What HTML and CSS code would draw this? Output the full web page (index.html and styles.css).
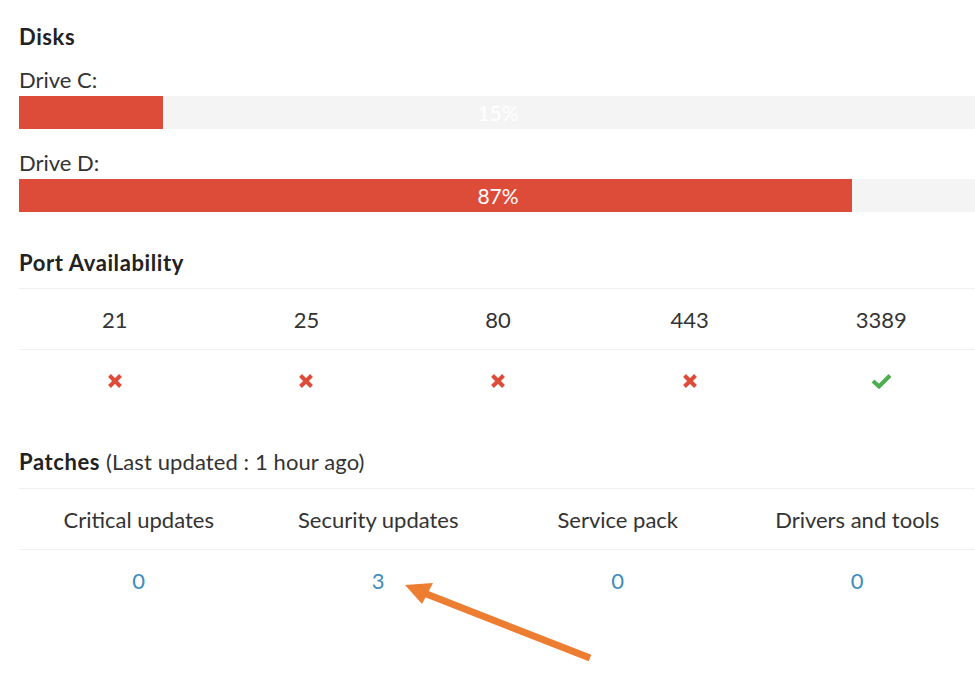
FILE: index.html
```html
<!DOCTYPE html>
<html>
<head>
<meta charset="utf-8">
<link rel="stylesheet" href="styles.css">
</head>
<body>
<div class="page">
  <h4 class="title t-disks">Disks</h4>
  <div class="drive-label first">Drive C:</div>
  <div class="progress">
    <div class="bar" style="width:15%"></div>
    <span class="pct pct-light">15%</span>
  </div>
  <div class="drive-label">Drive D:</div>
  <div class="progress">
    <div class="bar" style="width:87%"></div>
    <span class="pct">87%</span>
  </div>

  <h4 class="title t-ports">Port Availability</h4>
  <div class="grid ports">
    <div class="row">
      <div class="cell">21</div><div class="cell">25</div><div class="cell">80</div><div class="cell">443</div><div class="cell">3389</div>
    </div>
    <div class="row icons">
      <div class="cell"><svg class="x" viewBox="0 0 16 16"><path d="M2.5 2.5 L13.5 13.5 M13.5 2.5 L2.5 13.5"/></svg></div>
      <div class="cell"><svg class="x" viewBox="0 0 16 16"><path d="M2.5 2.5 L13.5 13.5 M13.5 2.5 L2.5 13.5"/></svg></div>
      <div class="cell"><svg class="x" viewBox="0 0 16 16"><path d="M2.5 2.5 L13.5 13.5 M13.5 2.5 L2.5 13.5"/></svg></div>
      <div class="cell"><svg class="x" viewBox="0 0 16 16"><path d="M2.5 2.5 L13.5 13.5 M13.5 2.5 L2.5 13.5"/></svg></div>
      <div class="cell"><svg class="check" viewBox="0 0 21 16"><path d="M2 8 L8 13.5 L19 2.5"/></svg></div>
    </div>
  </div>

  <h4 class="title t-patches">Patches <span class="sub">(Last updated : 1 hour ago)</span></h4>
  <div class="grid patches">
    <div class="row">
      <div class="cell">Critical updates</div><div class="cell">Security updates</div><div class="cell">Service pack</div><div class="cell">Drivers and tools</div>
    </div>
    <div class="row">
      <div class="cell"><a class="num">0</a></div><div class="cell"><a class="num">3</a></div><div class="cell"><a class="num">0</a></div><div class="cell"><a class="num">0</a></div>
    </div>
  </div>
</div>
<svg class="arrow" width="975" height="680" viewBox="0 0 975 680">
  <line x1="590" y1="658" x2="424" y2="593" stroke="#ed7d31" stroke-width="7"/>
  <polygon points="405,585 433,583 422,604" fill="#ed7d31"/>
</svg>
</body>
</html>
```

FILE: styles.css
```css
html, body {
  margin: 0;
  padding: 0;
  background: #fff;
  overflow: hidden;
}
body {
  width: 975px;
  height: 680px;
  position: relative;
  font-family: Lato, "Noto Sans", sans-serif;
  color: #333;
  font-size: 22px;
}
.page {
  padding-left: 19px;
  width: 958px;
}
.title {
  margin: 0;
  font-size: 22px;
  font-weight: 700;
  line-height: 28px;
  color: #222;
  letter-spacing: 0.6px;
}
.t-disks { padding-top: 23px; }
.t-ports { margin-top: 37px; margin-bottom: 11px; }
.t-patches { margin-top: 38px; margin-bottom: 12px; }
.sub { font-weight: 400; color: #333; letter-spacing: 0.1px; }
.drive-label {
  margin-top: 20px;
  line-height: 28px;
  margin-bottom: 2px;
}
.drive-label.first { margin-top: 15px; }
.progress {
  position: relative;
  height: 33px;
  background: #f4f4f4;
  margin-top: 1px;
}
.bar {
  height: 100%;
  background: #dd4b39;
}
.pct {
  position: absolute;
  left: 0;
  right: 0;
  top: 0;
  text-align: center;
  line-height: 33px;
  color: #fff;
  font-size: 21px;
}
.grid .row {
  display: grid;
  border-top: 1px solid #f0f0f0;
  align-items: center;
  padding-top: 2px;
  box-sizing: border-box;
  height: 61px;
}
.ports .row { grid-template-columns: repeat(5, 1fr); }
.patches .row { grid-template-columns: repeat(4, 1fr); }
.cell {
  text-align: center;
  line-height: 28px;
}
.icons .cell { display: flex; justify-content: center; }
.x { width: 16px; height: 16px; }
.x path { stroke: #dd4b39; stroke-width: 4; fill: none; }
.check { width: 21px; height: 16px; }
.check path { stroke: #4cae4c; stroke-width: 4; fill: none; }
.num { color: #3c8dbc; text-decoration: none; }
.arrow {
  position: absolute;
  left: 0;
  top: 0;
}
```
